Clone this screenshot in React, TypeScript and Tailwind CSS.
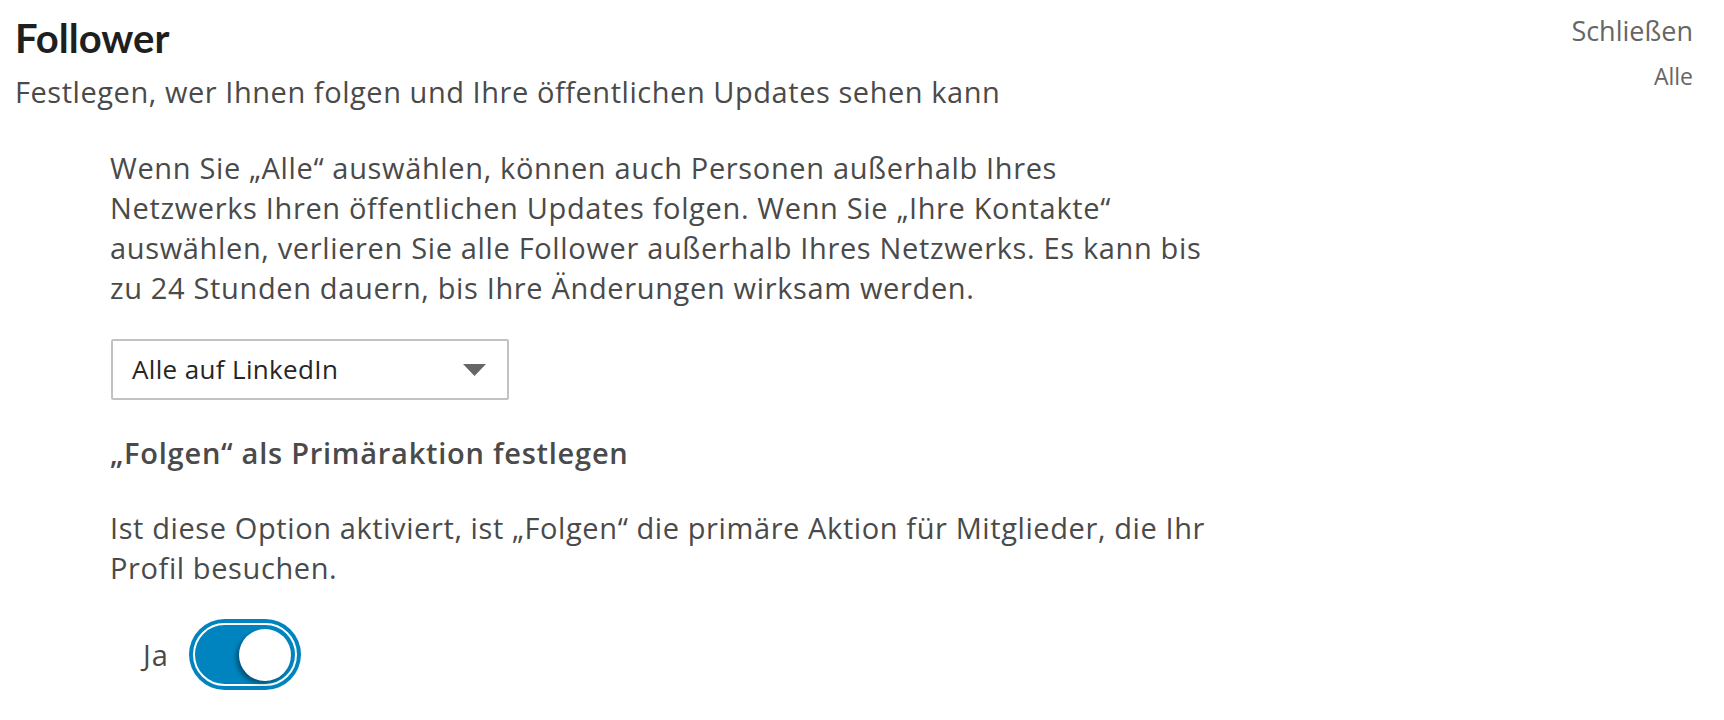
import React from "react";

export default function App() {
  return (
    <div
      className="w-full h-[720px] bg-white overflow-hidden"
      style={{ fontFamily: "'Open Sans', 'Noto Sans', sans-serif" }}
    >
      <div className="flex justify-between">
        <div className="pl-[15px] pt-[14px]">
          <h1 className="text-[40px] leading-[48px] font-bold text-[#1f1f1f]" style={{ fontFamily: "Lato, sans-serif" }}>Follower</h1>
          <p className="mt-[12px] text-[29px] leading-[36px] tracking-[0.55px] text-[#4a4a4a]">
            Festlegen, wer Ihnen folgen und Ihre öffentlichen Updates sehen kann
          </p>
        </div>
        <div className="flex flex-col items-end pr-[31px] pt-[14px]">
          <button className="text-[27px] leading-[34px] text-[#666666]">Schließen</button>
          <span className="mt-[14px] text-[23px] leading-[28px] text-[#666666]">Alle</span>
        </div>
      </div>

      <div className="pl-[110px] mt-[38px] w-[1260px]">
        <p className="text-[29px] leading-[40px] tracking-[0.65px] text-[#4a4a4a] w-[1150px]">
          Wenn Sie „Alle“ auswählen, können auch Personen außerhalb Ihres
          <br />
          Netzwerks Ihren öffentlichen Updates folgen. Wenn Sie „Ihre Kontakte“
          <br />
          auswählen, verlieren Sie alle Follower außerhalb Ihres Netzwerks. Es kann bis
          <br />
          zu 24 Stunden dauern, bis Ihre Änderungen wirksam werden.
        </p>

        <div className="mt-[31px] ml-[1px] w-[398px] h-[61px] border-2 border-[#c2c2c2] rounded-[2px] flex items-center justify-between pl-[19px] pr-[21px]">
          <span className="text-[26px] tracking-[0.35px] text-[#262626]">Alle auf LinkedIn</span>
          <svg width="23" height="12" viewBox="0 0 23 12">
            <polygon points="0,0 23,0 11.5,12" fill="#666666" />
          </svg>
        </div>

        <h2 className="mt-[35px] text-[29px] leading-[36px] tracking-[0.75px] font-semibold text-[#4a4a4a]">
          „Folgen“ als Primäraktion festlegen
        </h2>

        <p className="mt-[37px] text-[29px] leading-[40px] tracking-[0.6px] text-[#4a4a4a] w-[1150px]">
          Ist diese Option aktiviert, ist „Folgen“ die primäre Aktion für Mitglieder, die Ihr
          <br />
          Profil besuchen.
        </p>

        <div className="mt-[31px] ml-[33px] flex items-center gap-[20px]">
          <span className="text-[29px] tracking-[1px] text-[#4a4a4a]">Ja</span>
          <div className="w-[112px] h-[71px] rounded-full bg-[#0084bf] p-[4px]">
            <div className="w-full h-full rounded-full border-2 border-white bg-[#0084bf] flex items-center justify-end pr-[4px]">
              <div className="w-[52px] h-[52px] rounded-full bg-white shadow-[-3px_3px_4px_rgba(0,0,0,0.35)]" />
            </div>
          </div>
        </div>
      </div>
    </div>
  );
}
